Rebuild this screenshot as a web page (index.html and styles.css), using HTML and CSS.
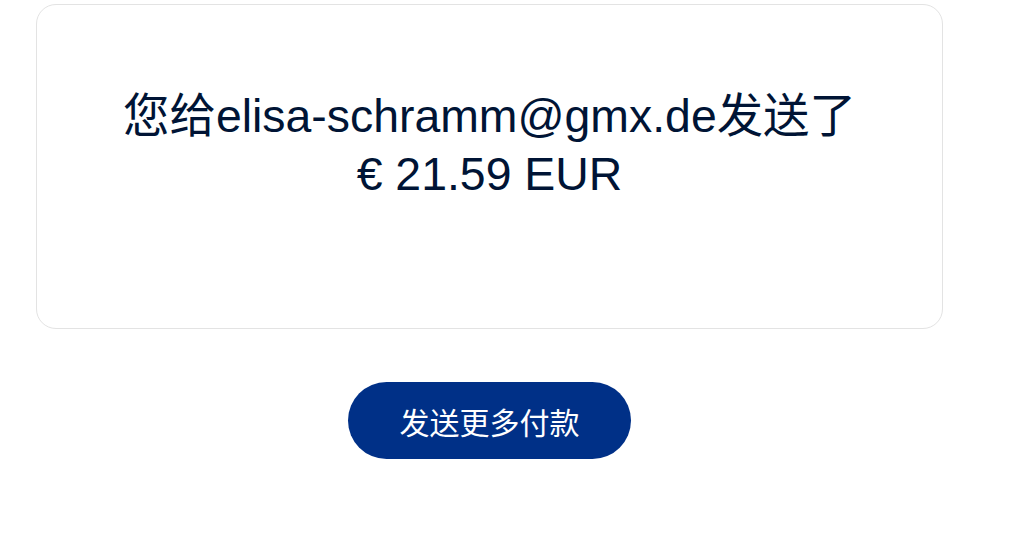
FILE: index.html
```html
<!DOCTYPE html>
<html lang="zh">
<head>
<meta charset="utf-8">
<link rel="stylesheet" href="styles.css">
</head>
<body>
<main class="page">
  <section class="card">
    <h1 class="title">您给elisa-schramm@gmx.de发送了<br>€ 21.59 EUR</h1>
  </section>
  <div class="actions">
    <button class="btn">发送更多付款</button>
  </div>
</main>
</body>
</html>
```
FILE: styles.css
```css
html, body {
  margin: 0;
  padding: 0;
  background: #ffffff;
}
body {
  font-family: "Liberation Sans", Arial, "Noto Sans CJK SC", sans-serif;
  color: #001435;
}
.page {
  width: 907px;
  padding: 4px 0 0 36px;
}
.card {
  box-sizing: border-box;
  height: 325px;
  border: 1px solid #e3e3e3;
  border-radius: 20px;
  padding-top: 82px;
  display: flex;
  justify-content: center;
}
.title {
  margin: 0;
  font-weight: 400;
  font-size: 46.4px;
  line-height: 58px;
  text-align: center;
}
.actions {
  display: flex;
  justify-content: center;
  padding-top: 53px;
}
.btn {
  width: 283px;
  height: 77px;
  border: none;
  border-radius: 40px;
  background: #003087;
  color: #ffffff;
  font-family: "Noto Sans CJK SC", sans-serif;
  font-size: 30px;
  padding: 0;
}
```
